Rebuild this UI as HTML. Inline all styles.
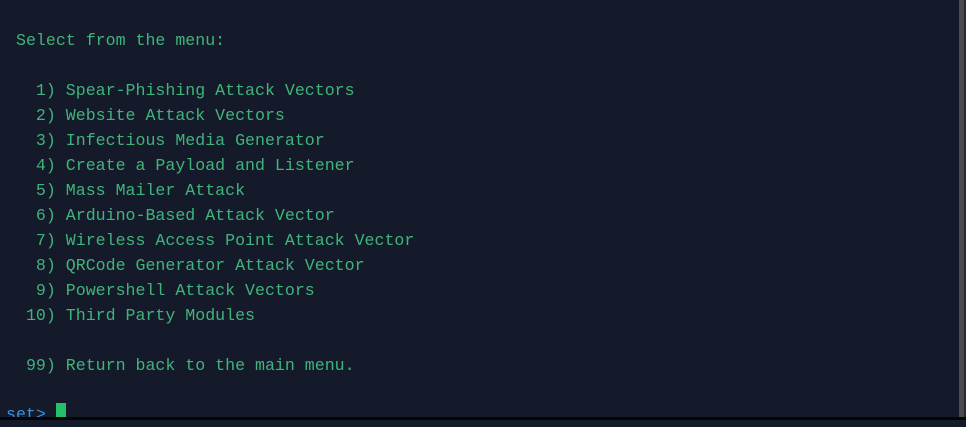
<!DOCTYPE html>
<html><head><meta charset="utf-8"><style>
html,body{margin:0;padding:0;width:966px;height:420px;overflow:hidden;background:#151a2b;}
.t{position:absolute;left:16px;top:28px;margin:0;font-family:"Liberation Mono",monospace;font-size:16.6px;line-height:25px;color:#3fb47a;white-space:pre;}
.p{position:absolute;left:6px;top:402px;font-family:'Liberation Mono',monospace;font-size:16.6px;line-height:25px;white-space:pre;color:#3b8fe0;}
.cur{position:absolute;left:56px;top:403px;width:10px;height:14px;background:#25c16a;}
.rs{position:absolute;left:959px;top:0;width:5px;height:417px;background:#4a4a4f;}
.rs2{position:absolute;left:964px;top:0;width:2px;height:417px;background:#2a2a2e;}
.bt{position:absolute;left:0;top:417px;width:966px;height:3px;background:#050505;}
</style></head><body>
<pre class="t">Select from the menu:

  1) Spear-Phishing Attack Vectors
  2) Website Attack Vectors
  3) Infectious Media Generator
  4) Create a Payload and Listener
  5) Mass Mailer Attack
  6) Arduino-Based Attack Vector
  7) Wireless Access Point Attack Vector
  8) QRCode Generator Attack Vector
  9) Powershell Attack Vectors
 10) Third Party Modules

 99) Return back to the main menu.
</pre>
<div class="p">set&gt;</div>
<div class="cur"></div>
<div class="rs"></div><div class="rs2"></div><div class="bt"></div>
</body></html>
